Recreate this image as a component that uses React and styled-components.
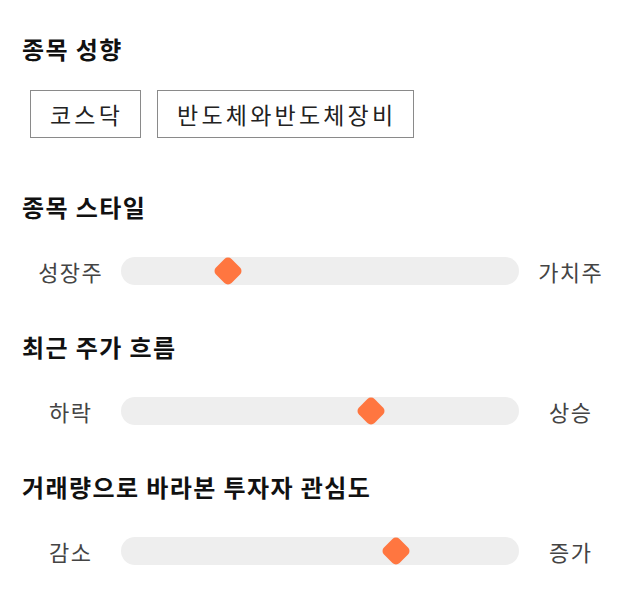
import React from 'react';
import styled, { createGlobalStyle } from 'styled-components';

const GlobalStyle = createGlobalStyle`
  body {
    margin: 0;
    background: #ffffff;
    font-family: "Noto Sans CJK KR", "Noto Sans", sans-serif;
  }
`;

const Page = styled.div`
  width: 640px;
  padding: 34px 22px 0;
  box-sizing: border-box;
`;
const Section = styled.section`
  margin-top: ${(props) => props.gap || 0}px;
`;
const Heading = styled.h2`
  margin: 0;
  font-size: 24px;
  line-height: 30px;
  font-weight: 700;
  color: #111;
  letter-spacing: 1.4px;
`;
const Tags = styled.div`
  display: flex;
  gap: 16px;
  margin: 26px 0 0 8px;
`;
const Tag = styled.span`
  display: flex;
  align-items: center;
  height: 48px;
  padding: 0 17px 0 19px;
  box-sizing: border-box;
  border: 1px solid #8a8a8a;
  font-size: 23px;
  letter-spacing: 3.2px;
  color: #222;
`;
const SliderRow = styled.div`
  display: grid;
  grid-template-columns: 96px 1fr 96px;
  column-gap: 3px;
  align-items: center;
  margin-top: 35px;
`;
const Label = styled.span`
  text-align: center;
  font-size: 22px;
  line-height: 28px;
  letter-spacing: 1.3px;
  text-indent: 1.3px;
  color: #444;
`;
const Track = styled.div`
  position: relative;
  height: 28px;
  border-radius: 14px;
  background: #eeeeee;
`;
const Thumb = styled.div`
  position: absolute;
  top: 50%;
  width: 22px;
  height: 22px;
  margin: -11px 0 0 -11px;
  border-radius: 5px;
  background: #ff7640;
  transform: rotate(45deg);
`;

function Slider({ left, right, value }) {
  return (
    <SliderRow>
      <Label>{left}</Label>
      <Track>
        <Thumb style={{ left: `${value}%` }} />
      </Track>
      <Label>{right}</Label>
    </SliderRow>
  );
}

export default function App() {
  return (
    <Page>
      <GlobalStyle />
      <Section>
        <Heading>종목 성향</Heading>
        <Tags>
          <Tag>코스닥</Tag>
          <Tag>반도체와반도체장비</Tag>
        </Tags>
      </Section>
      <Section gap={54}>
        <Heading>종목 스타일</Heading>
        <Slider left="성장주" right="가치주" value={27} />
      </Section>
      <Section gap={47}>
        <Heading>최근 주가 흐름</Heading>
        <Slider left="하락" right="상승" value={62.8} />
      </Section>
      <Section gap={47}>
        <Heading>거래량으로 바라본 투자자 관심도</Heading>
        <Slider left="감소" right="증가" value={69} />
      </Section>
    </Page>
  );
}
